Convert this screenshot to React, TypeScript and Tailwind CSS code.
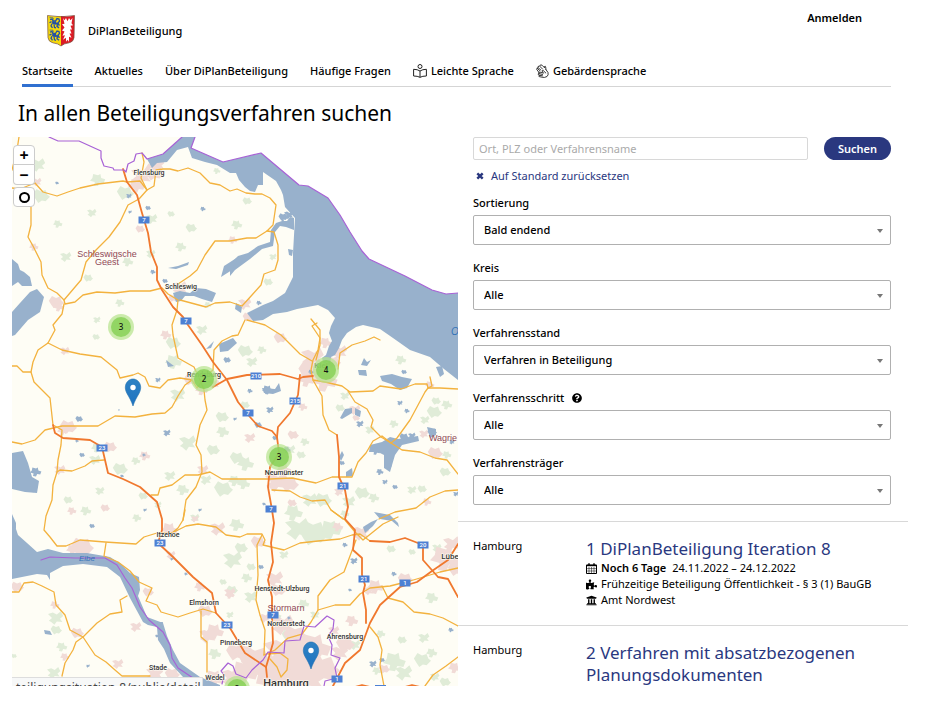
import React from "react";
import { FaPuzzlePiece, FaQuestionCircle, FaUniversity } from "react-icons/fa";

const motorways = [
  "123,169 127,182 137,195 142,213 148,233 151,252 157,267 157,280 162,290 173,307 183,317 188,325 202,345 213,362 227,380 238,402 250,417 258,426 272,431 277,437 279,453 270,467 268,487 272,510 274,523 271,543 273,562 268,580 272,597 272,617 273,643 269,657 266,667 267,677",
  "213,387 227,379 247,375 280,374 298,379 303,377 313,376",
  "300,375 298,395 290,413 278,427 277,437",
  "337,435 339,457 339,477 345,490 348,507 345,519 355,530 353,550 362,558 362,575 365,585 363,593 366,610 366,623",
  "333,686 345,663 360,650 370,623 380,605 400,587 417,582 432,571 448,560 458,544",
  "370,541 390,542 405,538 423,545 423,560 438,577 448,579 458,597",
  "53,425 55,433 63,438 90,440 102,447 108,473 123,479 140,487 157,502 162,519 162,530 158,543 173,557 193,577 212,593 216,613 227,625 230,628 245,653 266,667",
  "355,687 362,685 370,687",
  "405,687 412,685 420,687",
];

const roads = [
  "19,137 17,150 12,170",
  "12,188 20,189 35,183 43,192 57,196 68,192 80,188 98,184 123,181 127,182 140,181 147,190 139,199 128,205 120,222 109,237 96,250 86,262 81,280 64,300 57,293 48,288 42,275 41,262 33,246 28,237 31,225 31,190",
  "142,153 144,162 141,178 147,190 154,186 156,170 163,169 170,169 178,171 188,168 200,173 210,183 220,185 230,191 237,189 246,193 255,194 262,194 270,198 276,205 273,225 267,231 274,232 278,245 278,260 275,270 264,274 261,285 252,295 242,306 230,302 215,303 206,307 180,300",
  "267,231 256,238 247,238 230,241 215,241 205,255 197,270 190,276 178,284",
  "64,300 65,304 75,302 83,295 97,292 115,293 130,291 150,291 162,288 168,294 178,300 177,310 172,325 173,335 178,358 194,367 200,380 204,390 205,400 207,410 200,425 196,445 201,455 202,472 196,487 186,500 183,520 178,528 172,533",
  "64,304 62,314 53,325 55,330 48,343 38,350 33,362 31,372 34,382 50,398 53,425 62,430 61,445 58,460 57,472 53,485 52,500 46,516 44,530 50,537 57,546 66,546 80,540 105,542 136,544 144,537 157,533 172,533 186,526 198,524 216,527 226,535 240,537 247,534 262,534 265,540 263,545 284,550 300,543 318,541 340,539 352,535 360,534 370,541",
  "12,366 17,366 23,372 31,372",
  "48,343 62,350 80,354 101,357 117,370 120,378 133,375 138,373 145,377 149,386 160,388 168,380 180,378 192,380 197,388 206,376 213,370 214,350 222,341 232,336 238,335 245,320",
  "12,442 22,444 35,440 45,430 62,426 98,426 115,416 135,417 152,414 165,413 172,407 178,396 185,385 192,380",
  "57,472 60,470 72,471 85,466 92,461 104,460",
  "151,495 158,495 160,488 172,485 185,475 198,475 210,472 222,479 240,479 270,479 292,478 316,483 332,477 352,477 358,462 366,453 373,441 382,436 391,443 397,438 410,420 425,392 428,388 427,384 415,384 401,389 380,386 373,391 350,392 342,386 325,382 313,380 311,370 313,360 318,350 320,338 312,326 317,323",
  "247,320 265,325 281,335 290,344 300,354 312,361",
  "311,319 320,330 320,345 316,360",
  "428,388 440,388 458,389",
  "313,380 322,396 323,415 329,430 337,435",
  "348,391 355,402 367,409 373,420 371,427 381,437 391,443 402,450 420,452 435,458 447,460 458,474",
  "338,369 340,353 352,345 365,341 374,337 380,340",
  "272,490 290,491 300,497 312,501 325,500 331,510 343,519",
  "379,519 395,512 416,508 430,497 445,491 458,490",
  "331,510 345,520 355,532 363,540 383,524 398,517",
  "262,535 257,545 258,575 256,600 260,615 265,630 264,655",
  "356,540 350,556 344,572 330,580 318,596 318,610 311,622 302,634 288,638 275,650 264,655",
  "318,610 335,605 350,605 360,594 370,588 390,586 410,581 440,572 458,568",
  "382,586 388,598 403,602 414,612 430,614 443,618 458,626",
  "370,627 378,637 382,650 380,665 384,686",
  "458,657 446,666 433,675 425,686",
  "268,654 280,653 288,659 287,670 281,677 277,667 270,659",
  "12,592 19,592 24,583 33,582 42,586 54,592 56,605 65,615 70,630 83,637 95,655 106,662 115,670 122,676 150,676",
  "83,637 76,642 73,650 65,663 62,676",
  "83,637 97,623 110,614 122,612 120,600 127,596",
  "106,543 104,556 118,562 130,571 139,582 152,588 146,601 157,605 161,612 178,617 190,613 203,609 216,613",
  "201,611 201,637 207,642 207,672",
  "430,377 432,386 428,388",
  "183,520 185,510",
];

const borders = [
  "49,137 58,141 79,141 90,146 101,151 101,158 104,166 113,168 114,170 124,170 126,172 128,164 134,161 136,154 142,153 147,159 163,154 182,137",
  "195,137 191,148 223,162 261,153 299,185 308,186 328,198 340,215 350,232 362,251 369,259 405,276 432,290 446,294 458,293",
  "41,560 50,557 75,558 105,558 117,565 125,578 132,588 140,607 149,620 163,632 170,645 172,658 178,668 196,680",
  "222,684 224,675 221,671 228,663 233,666 236,674 246,678 252,670 263,660 268,652 284,653 285,641 300,640 304,626 315,627 327,616 334,620 333,629 328,636 332,645 331,655 340,658 335,668 337,678 325,681 324,686",
];

const water = [
  "182,137 195,137 191,148 223,162 261,153 299,185 308,186 328,198 340,215 350,232 362,251 369,259 405,276 432,290 446,294 458,293 458,380 444,369 430,357 410,350 393,338 380,329 363,325 356,327 347,333 342,340 339,348 335,355 331,357 330,364 325,368 322,358 326,355 329,346 332,341 329,333 331,326 335,318 328,310 318,305 297,309 287,312 273,314 263,320 253,321 247,313 255,309 263,305 273,301 285,293 290,283 293,277 293,253 295,218 285,207 283,195 281,190 276,181 263,172 263,185 258,185 255,192 250,191 245,187 239,180 236,173 230,173 217,165 205,162 192,158 188,147 177,150 167,162 157,163 152,168 147,159 163,154",
  "12,312 20,303 30,292 37,289 44,297 40,312 28,320 15,335 12,336",
  "12,259 18,264 20,270 24,272 30,277 32,286 22,286 18,282 12,286",
  "12,453 23,451 28,463 32,477 39,481 37,493 25,492 12,489",
  "12,517 18,535 27,543 37,552 48,549 63,553 87,553 110,557 121,564 130,573 139,577 140,590 138,596 147,617 163,623 167,636 173,650 180,663 200,677 220,685 220,687 203,687 183,677 170,663 164,649 158,640 157,627 148,625 143,622 130,598 120,577 107,567 83,564 63,566 50,573 50,580 47,575 37,574 12,579",
  "173,293 180,291 190,293 196,288 206,289 216,293 212,302 202,299 194,296 185,296 181,301 176,302",
  "230,264 238,256 248,253 258,246 270,242 271,230 276,223 282,221 282,215 284,221 287,221 290,217 294,218 294,230 286,227 280,226 275,232 273,246 262,249 250,259 235,270 230,276",
  "236,303 242,307 241,313 235,309",
  "380,376 392,374 402,377 412,379 407,388 400,390 391,384 382,381",
  "370,445 382,442 390,437 398,439 418,436 419,441 402,445 395,455 390,472 384,468 384,455 378,452 369,452",
  "219,344 233,338 237,343 228,351 220,352",
  "262,388 275,389 279,383 281,391 273,394 264,393",
  "427,427 436,429 436,435 430,438",
  "436,367 442,366 444,374 440,377",
  "358,370 366,370 367,376 359,375",
  "364,358 367,362 371,360 367,366 361,365",
  "352,408 345,409 340,418 342,419 352,413",
  "355,408 361,411 360,417 355,415",
  "206,349 214,341 211,348",
  "363,527 371,522 378,519 373,526 365,533",
  "374,512 390,515 398,523 399,527 392,521 380,519",
  "224,266 238,257 232,270 221,277",
  "288,249 293,250 292,256 289,255",
  "44,630 50,631 52,635 45,634",
  "157,622 163,622 162,627 157,627",
  "342,451 344,455 341,461 339,457",
  "346,472 352,468 353,476 346,477",
  "168,268 178,266 189,262 188,265 176,269",
  "166,360 174,366 168,367",
  "12,514 16,523 16,529 12,527",
];

// small ponds: x, y, size
const ponds = [
  [129, 196, 3], [148, 208, 3], [203, 209, 3], [130, 212, 2], [165, 281, 3], [153, 272, 3], [158, 380, 3], [79, 419, 4], [77, 441, 2],
  [167, 433, 4], [82, 455, 3], [36, 472, 6], [34, 489, 4], [122, 476, 2], [144, 455, 2], [145, 510, 2], [92, 526, 3], [268, 390, 6],
  [270, 410, 4], [258, 425, 4], [250, 391, 3], [360, 424, 4], [342, 463, 3], [388, 466, 4], [385, 482, 3], [395, 487, 3], [407, 411, 3],
  [400, 403, 3], [264, 504, 2], [345, 545, 3], [354, 561, 4], [261, 567, 3], [394, 574, 3], [373, 664, 4], [382, 660, 3], [451, 630, 3],
  [88, 666, 2], [157, 636, 2], [186, 574, 2], [172, 559, 2], [275, 438, 3], [287, 450, 4], [452, 442, 3], [404, 437, 5], [376, 451, 5],
  [289, 215, 5], [283, 217, 5], [259, 303, 3], [235, 419, 2], [227, 360, 4], [208, 375, 3], [412, 436, 4], [404, 372, 3], [311, 372, 3],
  [456, 494, 3], [432, 432, 5], [380, 472, 4], [200, 510, 2], [57, 183, 2], [107, 265, 1], [119, 410, 1], [350, 590, 2], [289, 618, 2],
];

const woods = [
  [38, 165, 8], [41, 196, 9], [98, 180, 8], [92, 213, 5], [125, 193, 9], [58, 224, 5], [66, 257, 6], [88, 278, 5], [128, 262, 6],
  [152, 219, 6], [191, 228, 6], [181, 247, 6], [151, 254, 5], [171, 214, 4], [217, 171, 4], [178, 145, 4], [247, 201, 5], [237, 225, 6],
  [273, 257, 4], [268, 282, 5], [120, 303, 5], [97, 320, 4], [173, 343, 8], [174, 362, 9], [178, 395, 8], [96, 337, 4], [208, 305, 4],
  [202, 330, 6], [245, 351, 8], [262, 350, 5], [252, 362, 6], [222, 417, 7], [223, 432, 7], [188, 443, 9], [213, 450, 7], [97, 448, 6],
  [95, 460, 6], [120, 469, 8], [136, 461, 5], [170, 476, 6], [68, 500, 5], [86, 511, 6], [100, 491, 5], [143, 496, 5], [183, 490, 7],
  [206, 480, 6], [223, 489, 10], [235, 481, 7], [158, 505, 4], [237, 458, 8], [246, 464, 9], [290, 450, 6], [301, 455, 5], [244, 484, 7],
  [310, 500, 8], [323, 500, 9], [294, 513, 10], [298, 529, 13], [313, 533, 16], [331, 530, 12], [349, 502, 7], [362, 493, 8], [374, 498, 6],
  [345, 396, 5], [340, 408, 5], [401, 360, 6], [425, 350, 5], [434, 412, 8], [447, 405, 6], [425, 420, 5], [436, 401, 5], [447, 455, 5],
  [412, 490, 5], [422, 489, 5], [394, 424, 5], [370, 430, 5], [445, 472, 6], [345, 514, 5], [437, 548, 5], [391, 549, 5], [432, 598, 7],
  [233, 560, 10], [241, 548, 7], [247, 578, 6], [251, 597, 7], [232, 590, 6], [237, 525, 8], [56, 618, 8], [56, 630, 6], [62, 647, 6],
  [54, 673, 7], [14, 656, 3], [215, 654, 7], [230, 615, 4], [223, 582, 4], [137, 518, 5], [195, 518, 5], [288, 635, 7], [304, 604, 6],
  [284, 555, 5], [251, 567, 5], [395, 662, 12], [404, 673, 9], [422, 660, 9], [432, 653, 6], [424, 638, 6], [402, 640, 5], [377, 671, 5],
  [355, 645, 6], [445, 682, 6], [381, 634, 5], [435, 677, 5], [412, 552, 4], [277, 616, 5], [315, 615, 5], [245, 405, 5], [305, 442, 5],
];

const towns = [
  [142, 176, 11], [154, 172, 11], [137, 186, 9], [158, 165, 7], [140, 229, 5], [34, 247, 5], [37, 182, 5], [56, 302, 8], [59, 307, 6],
  [180, 288, 8], [173, 298, 5], [233, 240, 5], [245, 304, 7], [248, 317, 6], [166, 335, 6], [65, 351, 5], [190, 380, 7], [202, 390, 7],
  [214, 384, 6], [68, 427, 9], [63, 431, 6], [60, 470, 6], [110, 447, 7], [145, 456, 6], [203, 470, 6], [105, 508, 5], [72, 511, 5],
  [195, 519, 4], [280, 338, 7], [326, 343, 7], [313, 358, 12], [311, 371, 14], [325, 381, 14], [340, 352, 8], [333, 362, 8], [307, 380, 9],
  [250, 438, 6], [293, 435, 6], [303, 407, 5], [277, 482, 12], [289, 484, 10], [284, 470, 8], [355, 410, 6], [356, 418, 4], [430, 385, 5],
  [424, 434, 5], [435, 453, 8], [427, 502, 5], [339, 492, 5], [292, 503, 5], [338, 527, 6], [361, 533, 9], [258, 542, 8], [376, 587, 9],
  [369, 591, 5], [405, 579, 8], [446, 559, 16], [452, 544, 9], [456, 569, 9], [170, 530, 9], [171, 555, 5], [82, 547, 12], [73, 550, 7],
  [218, 529, 8], [17, 587, 7], [55, 605, 5], [136, 627, 6], [77, 633, 7], [65, 657, 5], [118, 664, 6], [148, 592, 6], [200, 587, 6],
  [230, 593, 6], [205, 611, 8], [215, 632, 10], [208, 636, 9], [236, 652, 11], [247, 654, 12], [155, 674, 9], [172, 674, 8], [215, 679, 11],
  [275, 579, 9], [278, 590, 8], [230, 595, 5], [283, 625, 12], [295, 636, 13], [302, 646, 13], [265, 618, 6], [255, 660, 18], [266, 670, 20],
  [285, 655, 22], [300, 653, 22], [315, 648, 18], [300, 673, 28], [322, 669, 18], [245, 673, 15], [340, 653, 9], [345, 644, 10],
  [352, 621, 7], [334, 631, 6], [384, 669, 6], [455, 668, 7], [233, 678, 12], [278, 680, 22],
];

const blobs = [
  "M-1,-.6L-.4,-.8L.1,-.5L.6,-1L.9,-.3L.5,.1L.8,.6L.1,.5L-.2,1L-.6,.6L-.9,.4L-.5,0Z",
  "M-.9,-.2L-.5,-.9L0,-.6L.5,-.8L.7,-.2L1,.1L.5,.7L.1,.6L-.3,.9L-.6,.4Z",
  "M-.6,-.9L0,-.7L.3,-.9L.4,-.3L.9,-.1L.7,.5L.2,.4L0,.9L-.5,.8L-.4,.3L-1,.1L-.7,-.3Z",
];

const cities: [string, number, number, number][] = [
  ["Flensburg", 149, 175, 7],
  ["Schleswig", 181, 289, 7],
  ["Rendsburg", 204, 377, 7],
  ["Kiel", 321, 368, 8],
  ["Neumünster", 284, 475, 7],
  ["Itzehoe", 168, 537, 7],
  ["Elmshorn", 204, 605, 7],
  ["Pinneberg", 236, 645, 7],
  ["Henstedt-Ulzburg", 282, 591, 7],
  ["Norderstedt", 286, 626, 7],
  ["Ahrensburg", 345, 639, 7],
  ["Stade", 158, 670, 7],
  ["Wedel", 215, 680, 7],
  ["Lübe", 450, 559, 8],
  ["Hamburg", 286, 687, 11],
];

const regions: [string, number, number][] = [
  ["Schleswigsche", 107, 257],
  ["Geest", 107, 265],
  ["Stormarn", 286, 611],
  ["Wagrie", 443, 441],
];

const shields: [string, number, number][] = [
  ["7", 144, 220], ["7", 186, 321], ["7", 248, 413], ["7", 271, 509], ["7", 273, 615], ["210", 256, 376], ["215", 295, 401],
  ["23", 102, 448], ["23", 160, 543], ["23", 227, 625], ["21", 343, 486], ["21", 364, 579], ["20", 423, 545], ["1", 405, 583],
  ["1", 337, 679],
];

const clusters = [
  [3, 121, 327],
  [2, 204, 379],
  [4, 326, 370],
  [3, 279, 457],
  [2, 237, 689],
];

const pins = [
  [133, 406],
  [311, 669],
];

function Blobs({ data, fill }: { data: number[][]; fill: string }) {
  return (
    <g fill={fill}>
      {data.map(([x, y, size], i) => (
        <path key={i} d={blobs[i % 3]} transform={`translate(${x} ${y}) scale(${size} ${size * 0.85})`} />
      ))}
    </g>
  );
}

function Lines({ data, stroke, width }: { data: string[]; stroke: string; width: number }) {
  return (
    <g fill="none" stroke={stroke} strokeWidth={width} strokeLinejoin="round" strokeLinecap="round">
      {data.map((points) => (
        <polyline key={points} points={points} />
      ))}
    </g>
  );
}

function MapDrawing() {
  return (
    <svg
      viewBox="12 137 446 549"
      preserveAspectRatio="xMinYMin slice"
      className="block w-full h-full font-['Roboto',sans-serif]"
      role="img"
      aria-label="Karte"
    >
      <defs>
        <linearGradient id="pin" x1="0" y1="0" x2="0" y2="1">
          <stop offset="0" stopColor="#2e82c4" />
          <stop offset="1" stopColor="#1f73c0" />
        </linearGradient>
      </defs>
      <rect x="12" y="137" width="446" height="549" fill="#fefdf5" />
      <polygon
        fill="#fff"
        points="195,137 191,148 223,162 261,153 299,185 308,186 328,198 340,215 350,232 362,251 369,259 405,276 432,290 446,294 458,293 458,137"
      />
      <Blobs data={woods} fill="#e0ecd8" />
      <Blobs data={towns} fill="#f1dbd7" />
      <g fill="#98b1cc">
        {water.map((points) => (
          <polygon key={points} points={points} />
        ))}
      </g>
      <Blobs data={ponds} fill="#98b1cc" />
      <Lines data={roads} stroke="#f3b23e" width={1.3} />
      <Lines data={motorways} stroke="#f0782e" width={1.8} />
      <Lines data={borders} stroke="#a862d6" width={1.2} />

      <g textAnchor="middle" className="font-medium" fill="#333" stroke="#fefdf5" strokeWidth="1.2" paintOrder="stroke">
        {cities.map(([name, x, y, size]) => (
          <text key={name} x={x} y={y} fontSize={size}>
            {name}
          </text>
        ))}
      </g>
      <g textAnchor="middle" fill="#8f4856" fontSize="9" className="font-['Liberation_Sans',sans-serif]">
        {regions.map(([name, x, y]) => (
          <text key={name} x={x} y={y}>
            {name}
          </text>
        ))}
      </g>
      <g fill="#3473b8" className="italic font-['Liberation_Sans',sans-serif]">
        <text x="79" y="561" fontSize="8">Elbe</text>
        <text x="451" y="335" fontSize="10">O</text>
      </g>
      <g textAnchor="middle" fontSize="6" fill="#fff" className="font-medium">
        {shields.map(([label, x, y], i) => (
          <g key={i}>
            <rect x={x - 5.5} y={y - 3.5} width="11" height="7" fill="#4d80d3" />
            <text x={x} y={y + 2}>
              {label}
            </text>
          </g>
        ))}
      </g>
      <rect x="375" y="685" width="11" height="2" fill="#4d80d3" />
      {pins.map(([x, y]) => (
        <g key={x} transform={`translate(${x} ${y})`}>
          <path
            d="M0,0C-1.500,-5 -4,-9 -6,-12.500C-7.600,-15.500 -8,-18 -7.500,-20.500C-6.500,-24.500 -3.500,-27 0,-27C3.500,-27 6.500,-24.500 7.500,-20.500C8,-18 7.600,-15.500 6,-12.500C4,-9 1.500,-5 0,0Z"
            fill="url(#pin)"
            stroke="#2470ae"
            strokeWidth=".6"
          />
          <circle cy="-18.500" r="2.700" fill="#fff" />
        </g>
      ))}
      <g textAnchor="middle" fontSize="8" className="font-medium font-['Noto_Sans',sans-serif]">
        {clusters.map(([count, x, y]) => (
          <g key={x}>
            <circle cx={x} cy={y} r="13" fill="#b5e28c" fillOpacity=".7" />
            <circle cx={x} cy={y} r="10" fill="#83d053" fillOpacity=".8" />
            <text x={x} y={y + 3} fill="#111">
              {count}
            </text>
          </g>
        ))}
      </g>
    </svg>
  );
}

function CoatOfArms() {
  return (
    <svg viewBox="0 0 28 31" preserveAspectRatio="none" className="w-7 h-8" aria-hidden="true">
      <path d="M.5,.5Q7,2 14,1V30Q11,27.500 6,27Q1.500,26 1,22Z" fill="#f5d90a" />
      <path d="M14,1Q21,2 27.500,.5L27,22Q26.500,26 22,27Q17,27.500 14,30Z" fill="#dc1b25" />
      <g id="lion">
        <path
          d="M3,4.500L5,4L6,5.500L8.500,6L10,3.500L12,4L12.500,6L11,7.500L12,9.500L10.500,9.500M4.500,6.500L2.500,7.500M5,7.500L8.500,8.500L10.500,8L10,11L12,12.500M5,8.500L4,10.500L5.500,12.500M7,9L7.500,12L9,12.500"
          fill="none"
          stroke="#2451a4"
          strokeWidth="1.300"
        />
        <path d="M5,5.500L9,6.500L10,9L6,9Z" fill="#2451a4" />
        <path d="M2.500,2.600L6,2.800L6.500,4.300" fill="none" stroke="#2451a4" strokeWidth=".7" />
      </g>
      <use href="#lion" y="12" />
      <path
        d="M16,3L17.500,5L19,3L20.500,6L22,3L23.500,5L25.500,3L24.500,8L26,10L23.500,10.500L25,14L23,14L24.500,18L22.500,18L24.500,22L22,21L22,26L20.500,24L19,26L19,22L16,24L18,19.500L15.500,20L17.500,16L15,15L17.500,12L15,9L17.500,8.500Z"
        fill="#fff"
      />
      <path d="M.5,.5Q14,3 27.500,.5L27,22Q26.500,26 22,27Q17,27.500 14,30Q11,27.500 6,27Q1.500,26 1,22Z" fill="none" stroke="#77503f" strokeWidth=".7" />
    </svg>
  );
}

function ReaderIcon() {
  return (
    <svg viewBox="0 0 14 14" className="w-3.5 h-3.5" fill="none" stroke="#222" strokeWidth="1" aria-hidden="true">
      <circle cx="7" cy="2.500" r="2" />
      <path d="M7,7Q4.500,5.300 .6,5.300V12Q4.500,12 7,13.300Q9.500,12 13.400,12V5.300Q9.500,5.300 7,7V13.300" />
    </svg>
  );
}

function SignLanguageIcon() {
  return (
    <svg
      viewBox="0 0 13 14"
      className="w-[13px] h-3.5"
      fill="none"
      stroke="#222"
      strokeWidth=".9"
      strokeLinecap="round"
      strokeLinejoin="round"
      aria-hidden="true"
    >
      <path d="M3,8.500L.8,5.500Q.3,4.500 1.300,4.200L2,3.500Q1.800,2.500 3,2.300L3.800,1.500Q5,.3 6.200,1.300L8.500,3.800V2.500Q9.500,1.800 9.700,3L9.900,5.500" />
      <path d="M1.300,4.200L3.500,6.500M2,3.500L4.800,6M3.500,2L6.500,5" />
      <path d="M9.900,5.500L12,8.500Q12.700,11 11,12.500Q8.500,14 6,13.200L3.200,12.600Q2.300,11.800 3.500,11.300L2.300,10.700Q1.800,9.600 3,9.500L2.800,8.700Q3,7.800 4,8.100L7.500,9.200L6,7Q6.200,5.900 7.200,6.500L9.800,9" />
      <path d="M3,9.500L6.500,10.500M3.500,11.300L6.500,11.800" />
    </svg>
  );
}

function CalendarIcon() {
  return (
    <svg viewBox="0 0 11 11" className="w-[11px] h-[11px]" fill="none" stroke="currentColor" aria-hidden="true">
      <path d="M.5,2H10.500V10.500H.5Z" />
      <path d="M.5,2.500H10.500" strokeWidth="1.400" />
      <path d="M3,.2V3M8,.2V3" strokeWidth="1.400" />
      <path d="M.5,5.600H10.500M.5,8H10.500M3,4V10.500M5.500,4V10.500M8,4V10.500" strokeWidth=".5" />
    </svg>
  );
}

const navItems = [
  { label: "Startseite", active: true },
  { label: "Aktuelles" },
  { label: "Über DiPlanBeteiligung" },
  { label: "Häufige Fragen" },
  { label: "Leichte Sprache", icon: <ReaderIcon /> },
  { label: "Gebärdensprache", icon: <SignLanguageIcon /> },
];

const filters = [
  { id: "sortierung", label: "Sortierung", value: "Bald endend" },
  { id: "kreis", label: "Kreis", value: "Alle" },
  { id: "verfahrensstand", label: "Verfahrensstand", value: "Verfahren in Beteiligung" },
  { id: "verfahrensschritt", label: "Verfahrensschritt", value: "Alle", help: true },
  { id: "verfahrenstraeger", label: "Verfahrensträger", value: "Alle" },
];

const procedures = [
  {
    place: "Hamburg",
    title: "1 DiPlanBeteiligung Iteration 8",
    remaining: "Noch 6 Tage",
    period: "24.11.2022 – 24.12.2022",
    step: "Frühzeitige Beteiligung Öffentlichkeit - § 3 (1) BauGB",
    office: "Amt Nordwest",
  },
  { place: "Hamburg", title: "2 Verfahren mit absatzbezogenen Planungsdokumenten" },
];

export default function App() {
  return (
    <div className="min-h-screen bg-white text-black text-[11px] leading-4 font-['Noto_Sans',sans-serif]">
      <header className="pl-[22px] pr-[42px]">
        <div className="flex items-start justify-between pt-[10px] pl-[25px] pr-[29px] h-[54px]">
          <a href="#" className="flex items-center gap-[13px] pt-[5px] font-medium">
            <CoatOfArms />
            DiPlanBeteiligung
          </a>
          <a href="#" className="font-semibold">
            Anmelden
          </a>
        </div>
        <nav className="flex gap-[22px] h-[33px] border-b border-[#d5d5d5] font-medium">
          {navItems.map((item) => (
            <a
              key={item.label}
              href="#"
              className={`flex items-center gap-1 h-[33px] pt-[3px] whitespace-nowrap border-b-[3px] ${
                item.active ? "border-[#3070d0]" : "border-transparent"
              }`}
            >
              {item.icon}
              {item.label}
            </a>
          ))}
        </nav>
      </header>

      <main className="pl-3 pr-[25px]">
        <h1 className="pl-1.5 pt-3 pb-2.5 text-[21px] leading-7">In allen Beteiligungsverfahren suchen</h1>

        <div className="grid grid-cols-[446fr_450fr] items-start">
          <section className="relative h-[549px] overflow-hidden">
            <MapDrawing />
            <div className="absolute left-px top-2 flex flex-col text-base leading-none font-bold">
              <button aria-label="Vergrößern" className="w-[22px] h-5 bg-white border border-[#ccc] rounded-t-sm flex items-center justify-center">
                +
              </button>
              <button
                aria-label="Verkleinern"
                className="w-[22px] h-5 bg-white border border-t-0 border-[#ccc] rounded-b-sm flex items-center justify-center"
              >
                −
              </button>
              <button
                aria-label="Zurücksetzen"
                className="mt-0.5 w-[22px] h-5 bg-white border border-[#ccc] rounded-sm flex items-center justify-center"
              >
                <span className="w-[11px] h-[11px] border-2 border-black rounded-full" />
              </button>
            </div>
            <div className="absolute left-0 bottom-0 w-[191px] h-[9px] pt-1 pl-1 overflow-hidden whitespace-nowrap bg-[#f7f8f8] border-t border-r border-[#ddd] text-xs leading-3 text-[#444]">
              teiligungsituation-8/public/detail
            </div>
          </section>

          <section>
            <form className="pl-[15px] pr-[17px]" onSubmit={(e) => e.preventDefault()}>
              <div className="flex gap-4">
                <input
                  type="text"
                  aria-label="Ort, PLZ oder Verfahrensname"
                  placeholder="Ort, PLZ oder Verfahrensname"
                  className="flex-1 min-w-0 h-[23px] px-[5px] border border-[#d8d8d8] rounded-xs placeholder:text-[#aaa]"
                />
                <button type="submit" className="w-[67px] h-[23px] rounded-full bg-[#2a387f] text-white font-semibold">
                  Suchen
                </button>
              </div>
              <button type="reset" className="mt-1.5 mb-[7px] h-5 pl-[3px] flex items-center gap-[7px] text-[#2a387f]">
                <svg viewBox="0 0 8 8" className="w-2 h-2" aria-hidden="true">
                  <path d="M1.300,1.300L6.700,6.700M6.700,1.300L1.300,6.700" stroke="currentColor" strokeWidth="2.400" />
                </svg>
                Auf Standard zurücksetzen
              </button>
              <div className="flex flex-col gap-[13px]">
                {filters.map((filter) => (
                  <div key={filter.id}>
                    <div className="flex items-center gap-2 h-5 mb-0.5">
                      <label htmlFor={filter.id} className="font-medium">
                        {filter.label}
                      </label>
                      {filter.help && <FaQuestionCircle className="w-2.5 h-2.5" />}
                    </div>
                    <div className="relative">
                      <select
                        id={filter.id}
                        className="block appearance-none w-full h-[30px] pl-[10px] pr-6 bg-white border border-[#b0b0b0] rounded-xs font-medium"
                      >
                        <option>{filter.value}</option>
                      </select>
                      <svg viewBox="0 0 6 4" className="absolute right-2 top-[14px] w-1.5 h-1 pointer-events-none" aria-hidden="true">
                        <path d="M0,0H6L3,4Z" fill="#777" />
                      </svg>
                    </div>
                  </div>
                ))}
              </div>
            </form>

            <ul className="mt-4">
              {procedures.map((item) => (
                <li key={item.title} className="flex pt-4 pb-[17px] pl-[15px] border-t border-[#d8d8d8]">
                  <p className="w-[113px] shrink-0">{item.place}</p>
                  <div>
                    <h2 className="text-[17px] leading-[22px] text-[#2a387f]">
                      <a href="#">{item.title}</a>
                    </h2>
                    {item.office && (
                      <>
                        <p className="flex items-center gap-1">
                          <CalendarIcon />
                          <strong className="font-semibold">{item.remaining}</strong>
                          <span className="ml-0.5">{item.period}</span>
                        </p>
                        <p className="flex items-center gap-1">
                          <FaPuzzlePiece className="w-[11px] h-[11px]" />
                          {item.step}
                        </p>
                        <p className="flex items-center gap-1">
                          <FaUniversity className="w-[11px] h-[11px]" />
                          {item.office}
                        </p>
                      </>
                    )}
                  </div>
                </li>
              ))}
            </ul>
          </section>
        </div>
      </main>
    </div>
  );
}
